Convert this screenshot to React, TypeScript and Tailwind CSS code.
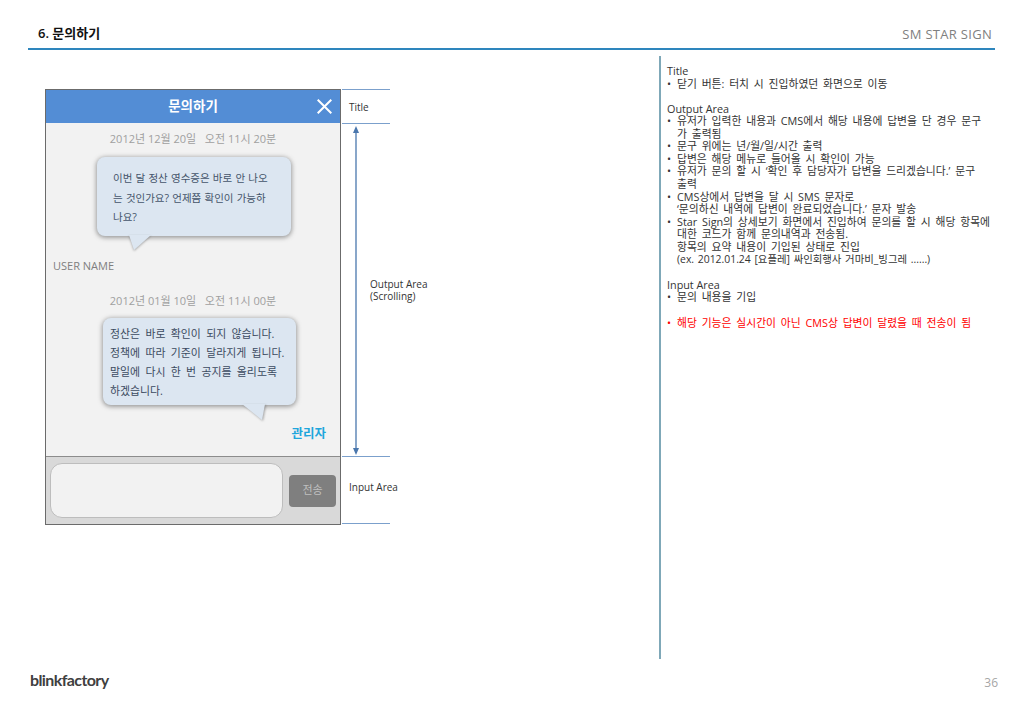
import React from 'react'

const FONT = '"Open Sans", "Noto Sans CJK KR", sans-serif'

const Bubble = ({ lines, className, tail }: { lines: string[]; className: string; tail: 'left' | 'right' }) => {
  return (
    <div className={`relative rounded-lg bg-[#dce6f1] shadow-[0_1px_4px_1px_rgba(90,90,90,0.55)] ${className}`}>
      {lines.map((line) => (
        <p key={line} className="whitespace-nowrap">
          {line}
        </p>
      ))}
      {tail === 'left' ? (
        <svg
          className="absolute left-[32px] top-[calc(100%-1px)] drop-shadow-[0_1px_1px_rgba(90,90,90,0.5)]"
          width="24"
          height="17"
          viewBox="0 0 24 17"
        >
          <path d="M0 0 L5 15 L22 0 Z" fill="#dce6f1" />
        </svg>
      ) : (
        <svg
          className="absolute right-[29px] top-[calc(100%-1px)] drop-shadow-[1px_1px_1px_rgba(90,90,90,0.5)]"
          width="25"
          height="18"
          viewBox="0 0 25 18"
        >
          <path d="M0 0 L20 16 L23 0 Z" fill="#dce6f1" />
        </svg>
      )}
    </div>
  )
}

const Phone = () => {
  return (
    <div className="flex h-[436px] w-[296px] flex-col border border-[#6b6b6b]">
      {/* Title */}
      <div className="relative flex h-[33px] items-center justify-center bg-[#538dd5]">
        <span className="text-[13.5px] font-semibold text-white">문의하기</span>
        <svg className="absolute right-[8px] top-[9px]" width="15" height="15" viewBox="0 0 15 15">
          <path d="M0.7 0.7 L14.3 14.3 M14.3 0.7 L0.7 14.3" stroke="#ffffff" strokeWidth="2" fill="none" />
        </svg>
      </div>

      {/* Output Area */}
      <div className="flex h-[333px] flex-col bg-[#f2f2f2] px-[7px] text-[11px]">
        <p className="mt-[8px] text-center leading-[15px] text-[#a0a0a0]">2012년 12월 20일&nbsp;&nbsp;&nbsp;오전 11시 20분</p>
        <Bubble
          tail="left"
          className="ml-[44px] mt-[11px] h-[79px] w-[194px] pl-[16px] pt-[12px] text-[10.5px] leading-[19.5px] text-[#44546a] [word-spacing:0.5px]"
          lines={['이번 달 정산 영수증은 바로 안 나오', '는 것인가요? 언제쯤 확인이 가능하', '나요?']}
        />
        <p className="mt-[22px] leading-[15px] text-[#7f7f7f]">USER NAME</p>
        <p className="mt-[20px] text-center leading-[15px] text-[#a0a0a0]">2012년 01월 10일&nbsp;&nbsp;&nbsp;오전 11시 00분</p>
        <Bubble
          tail="right"
          className="ml-[50px] mt-[10px] h-[87px] w-[193px] pl-[7px] pt-[6px] text-[10.9px] leading-[19px] text-[#3b4a60] [word-spacing:2.5px]"
          lines={['정산은 바로 확인이 되지 않습니다.', '정책에 따라 기준이 달라지게 됩니다.', '말일에 다시 한 번 공지를 올리도록', '하겠습니다.']}
        />
        <p className="mr-[7px] mt-[21px] text-right text-[12.5px] font-semibold leading-[16px] text-[#1fa6dc]">관리자</p>
      </div>

      {/* Input Area */}
      <div className="flex flex-1 items-center gap-[6px] border-t border-[#8c8c8c] bg-[#d9d9d9] pl-[4px] pr-[4px]">
        <div className="h-[55px] w-[233px] rounded-[12px] border border-[#bdbdbd] bg-[#f2f2f2]" />
        <div className="flex h-[32px] w-[47px] items-center justify-center rounded-[4px] bg-[#7f7f7f] pb-[1px] text-[11px] text-[#bfbfbf]">
          전송
        </div>
      </div>
    </div>
  )
}

const Annotations = () => {
  return (
    <div className="ml-[1px] flex h-[435px] w-[48px] flex-col text-[10px] leading-[12px] text-[#333333]">
      <div className="flex h-[35px] items-center whitespace-nowrap border-y border-[#7ba0cc] pl-[7px]">Title</div>
      <div className="flex h-[333px] items-center border-b border-[#7ba0cc] pl-[11px]">
        <svg className="shrink-0" width="6" height="331" viewBox="0 0 6 331">
          <path d="M3 6 V325" stroke="#4a77ad" strokeWidth="1.3" />
          <path d="M3 1 L6 8 H0 Z M3 330 L0 323 H6 Z" fill="#4a77ad" />
        </svg>
        <p className="ml-[11px] whitespace-nowrap">
          Output Area
          <br />
          (Scrolling)
        </p>
      </div>
      <div className="flex h-[67px] items-center whitespace-nowrap border-b border-[#7ba0cc] pb-[7px] pl-[7px]">Input Area</div>
    </div>
  )
}

const Li = ({ children }: { children: React.ReactNode }) => {
  return (
    <p className="flex">
      <span className="w-[10px] shrink-0">•</span>
      {children}
    </p>
  )
}

const Notes = () => {
  return (
    <div className="whitespace-nowrap text-[10.8px] leading-[12.55px] text-[#333333] [word-spacing:2px]">
      <p className="[word-spacing:0]">Title</p>
      <Li>닫기 버튼: 터치 시 진입하였던 화면으로 이동</Li>
      <p className="mt-[12.6px] [word-spacing:0]">Output Area</p>
      <Li>유저가 입력한 내용과 CMS에서 해당 내용에 답변을 단 경우 문구</Li>
      <p className="pl-[10px]">가 출력됨</p>
      <Li>문구 위에는 년/월/일/시간 출력</Li>
      <Li>답변은 해당 메뉴로 들어올 시 확인이 가능</Li>
      <Li>유저가 문의 할 시 ‘확인 후 담당자가 답변을 드리겠습니다.’ 문구</Li>
      <p className="pl-[10px]">출력</p>
      <Li>CMS상에서 답변을 달 시 SMS 문자로</Li>
      <p className="pl-[10px]">‘문의하신 내역에 답변이 완료되었습니다.’ 문자 발송</p>
      <Li>Star Sign의 상세보기 화면에서 진입하여 문의를 할 시 해당 항목에</Li>
      <p className="pl-[10px]">대한 코드가 함께 문의내역과 전송됨.</p>
      <p className="pl-[10px]">항목의 요약 내용이 기입된 상태로 진입</p>
      <p className="pl-[10px] text-[10.4px] [word-spacing:1px]">(ex. 2012.01.24 [요플레] 싸인회행사 거마비_빙그레 ......)</p>
      <p className="mt-[13px] [word-spacing:0]">Input Area</p>
      <Li>문의 내용을 기입</Li>
      <div className="mt-[13px] text-[#ff0000]">
        <Li>해당 기능은 실시간이 아닌 CMS상 답변이 달렸을 때 전송이 됨</Li>
      </div>
    </div>
  )
}

export default function App() {
  return (
    <div className="flex h-[708px] w-[1023px] flex-col overflow-hidden bg-white" style={{ fontFamily: FONT }}>
      {/* Header */}
      <header className="ml-[28px] mt-[20px] flex h-[30px] w-[967px] items-center justify-between border-b-2 border-[#2e86bd] pl-[10px] pr-[3px]">
        <h1 className="text-[13px] font-semibold text-[#111111]">6. 문의하기</h1>
        <span className="pt-[2px] text-[13px] tracking-[0.3px] text-[#808080]">SM STAR SIGN</span>
      </header>

      {/* Content */}
      <main className="ml-[45px] mt-[6px] flex h-[603px]">
        <div className="flex h-fit w-[614px] pt-[33px]">
          <Phone />
          <Annotations />
        </div>
        <div className="w-[340px] border-l-2 border-[#7fa8b8] pl-[6px] pt-[9px]">
          <Notes />
        </div>
      </main>

      {/* Footer */}
      <footer className="flex flex-1 items-center justify-between pb-[8px] pl-[30px] pr-[25px]">
        <span className="text-[16px] font-bold tracking-[-0.6px] text-[#404040]" style={{ fontFamily: 'Lato, sans-serif' }}>
          blinkfactory
        </span>
        <span className="pt-[6px] text-[12px] text-[#a6a6a6]">36</span>
      </footer>
    </div>
  )
}
